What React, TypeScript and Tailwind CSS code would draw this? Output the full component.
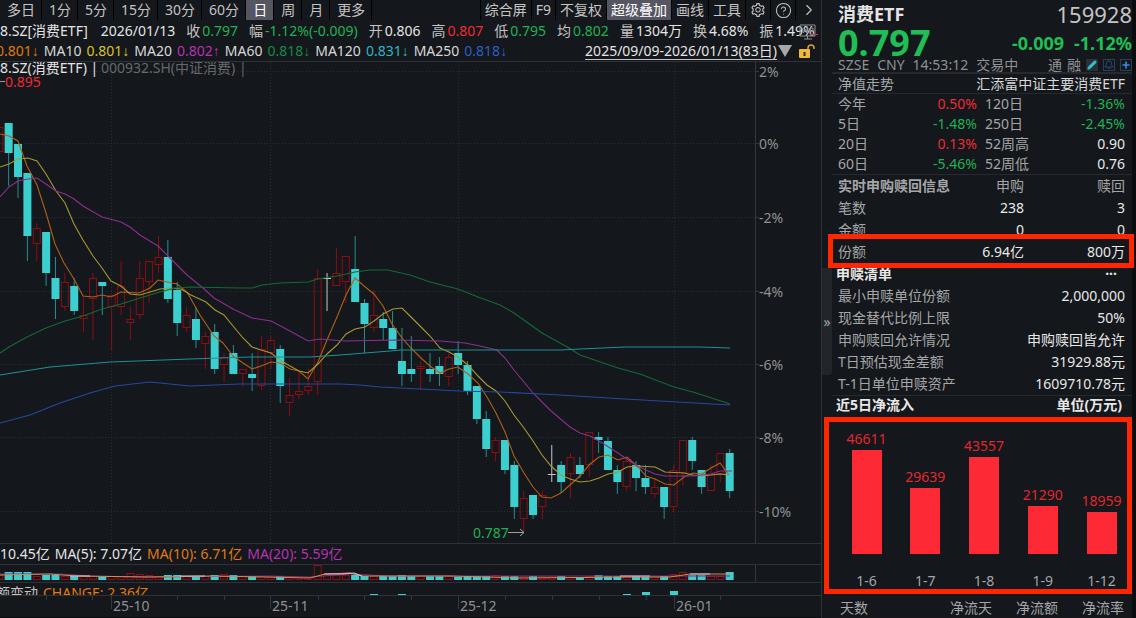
import { Bell, ChevronRight, CircleHelp, Pencil, Plus } from "lucide-react"
import { AiOutlineSetting } from "react-icons/ai"

const STEP = 9.364

// [type, high, top, bottom, low] with c = falling, r = rising, w = unchanged
type Candle = [string, number, number, number, number]

const candles: Candle[] = [
  ["r", 127, 127, 152, 152], ["c", 123, 123, 153, 186], ["c", 144, 144, 177, 198],
  ["c", 173, 173, 236, 261], ["r", 223, 228, 244, 261], ["c", 232, 232, 273, 286],
  ["c", 257, 278, 299, 319], ["r", 273, 282, 307, 311], ["c", 278, 286, 311, 315],
  ["r", 297, 315, 319, 332], ["r", 273, 278, 299, 340], ["c", 282, 282, 286, 315],
  ["r", 295, 295, 307, 350], ["r", 261, 286, 307, 315], ["r", 307, 319, 323, 340],
  ["r", 261, 278, 315, 319], ["r", 261, 261, 282, 303], ["r", 236, 257, 265, 273],
  ["c", 240, 257, 299, 303], ["c", 282, 290, 323, 336], ["r", 307, 315, 328, 332],
  ["c", 307, 319, 340, 348], ["r", 332, 336, 344, 369], ["c", 324, 332, 369, 374],
  ["r", 353, 357, 365, 382], ["c", 345, 353, 374, 374], ["r", 369, 369, 374, 386],
  ["c", 353, 374, 378, 391], ["r", 336, 349, 386, 390], ["r", 336, 340, 353, 369],
  ["c", 345, 349, 386, 403], ["r", 378, 395, 403, 416], ["r", 370, 391, 395, 399],
  ["r", 369, 386, 391, 395], ["r", 269, 278, 382, 395], ["w", 273, 278, 278, 311],
  ["r", 248, 273, 286, 286], ["r", 256, 256, 282, 303], ["c", 236, 269, 302, 302],
  ["c", 299, 303, 324, 353], ["r", 290, 315, 328, 332], ["c", 312, 319, 328, 340],
  ["c", 311, 328, 349, 349], ["c", 328, 361, 374, 386], ["c", 336, 369, 374, 382],
  ["r", 361, 366, 369, 390], ["c", 353, 369, 374, 382], ["c", 357, 366, 374, 386],
  ["r", 353, 357, 377, 386], ["c", 341, 353, 365, 374], ["c", 361, 365, 391, 395],
  ["c", 386, 386, 419, 424], ["c", 411, 419, 449, 457], ["r", 437, 440, 453, 461],
  ["c", 440, 440, 470, 474], ["c", 461, 465, 507, 519], ["r", 491, 498, 519, 532],
  ["c", 495, 495, 515, 519], ["r", 491, 495, 507, 519], ["w", 445, 474, 474, 482],
  ["c", 461, 465, 482, 493], ["r", 453, 457, 474, 498], ["c", 457, 465, 474, 478],
  ["r", 432, 432, 465, 477], ["c", 432, 437, 440, 453], ["c", 437, 441, 470, 470],
  ["c", 465, 470, 482, 494], ["r", 457, 461, 487, 491], ["c", 461, 465, 478, 491],
  ["c", 465, 478, 487, 494], ["r", 478, 487, 494, 498], ["c", 487, 487, 507, 519],
  ["r", 465, 470, 507, 512], ["r", 440, 440, 473, 486], ["c", 437, 440, 461, 470],
  ["c", 470, 470, 487, 494], ["r", 465, 474, 491, 491], ["r", 453, 453, 474, 482],
  ["c", 449, 453, 491, 498],
]

const volumes = [
  5, 8, 8, 8, 4, 5, 5, 4, 4, 4, 4, 4, 4, 4, 7, 6, 5, 4, 5, 5, 4, 4, 4, 5, 6, 5, 4, 4, 4, 4,
  4, 4, 3, 3, 15, 6, 5, 5, 5, 4, 4, 4, 4, 5, 4, 4, 4, 4, 4, 3, 4, 4, 4, 5, 4, 4, 4, 4, 4, 4,
  4, 3, 3, 4, 5, 4, 4, 4, 4, 3, 4, 4, 6, 8, 5, 5, 4, 4, 8,
]

const averages = [
  { color: "#b06018", points: "0,134 9,136 18,141 27,166 37,185 46,213 55,244 64,263 74,279 83,296 93,297 102,295 111,297 121,292 139,293 150,288 158,280 167,282 177,284 187,292 200,315 214,336 223,343 233,356 243,363 252,369 261,366 271,362 280,363 290,369 299,371 308,379 318,362 327,340 337,317 346,295 355,278 364,286 374,294 383,306 392,324 402,338 411,348 421,358 430,366 440,373 449,369 458,367 468,374 478,383 487,397 496,413 505,432 514,456 524,473 533,487 542,497 551,498 561,493 570,485 580,476 590,464 599,457 608,455 618,460 627,457 637,466 646,476 655,479 665,484 674,485 684,477 693,473 702,474 711,468 720,463 729,475" },
  { color: "#a89830", points: "0,167 9,164 18,159 28,158 37,161 46,174 56,191 65,203 74,224 83,240 93,256 102,268 111,281 121,286 130,294 140,295 150,292 160,289 170,288 181,289 191,295 206,302 215,310 224,315 233,326 243,338 252,347 261,350 271,353 280,360 290,366 299,371 308,373 318,364 327,354 337,345 346,334 355,329 365,327 374,321 383,314 393,309 402,308 411,317 421,327 430,336 440,348 449,352 458,357 468,365 478,376 487,385 496,391 505,401 514,415 524,428 533,441 542,455 551,466 561,475 570,479 580,482 590,481 599,478 608,474 618,472 627,467 637,466 655,467 665,472 684,473 693,475 702,476 720,474 729,475" },
  { color: "#8c2f8f", points: "0,197 9,187 18,181 28,179 37,178 46,184 56,191 65,194 74,199 83,206 102,217 121,222 130,227 140,235 158,246 168,256 187,275 203,288 214,298 233,309 252,318 271,321 290,331 308,341 320,339 345,341 395,340 440,341 465,343 480,346 497,350 505,358 514,370 533,393 550,410 570,427 580,433 590,436 599,441 618,453 637,466 655,474 665,476 693,476 711,474 720,471 732,471" },
  { color: "#136a35", points: "0,353 9,347 27,337 46,328 65,321 83,316 102,309 121,304 140,298 160,292 175,288 190,287 240,288 252,288 262,285 280,283 308,282 318,279 337,276 355,272 370,270 388,270 410,275 430,282 458,289 478,297 500,305 514,313 542,333 569,348 580,355 618,368 640,374 674,387 693,392 730,404" },
  { color: "#1f8f96", points: "0,375 50,367 110,362 190,359 250,357 310,357 340,355 390,351 400,350 460,350 560,350 580,349 625,347 700,347 730,348" },
  { color: "#2449a0", points: "0,423 30,415 60,403 90,393 115,386 150,382 190,386 240,384 340,384 360,385 380,387 420,389 460,391 500,392 560,395 625,399 730,405" },
]

const months = [
  { x: 111, label: "25-10" },
  { x: 270, label: "25-11" },
  { x: 458, label: "25-12" },
  { x: 674, label: "26-01" },
]

const levels = [
  { y: 72, label: "2%" },
  { y: 144, label: "0%" },
  { y: 218, label: "-2%" },
  { y: 292, label: "-4%" },
  { y: 365, label: "-6%" },
  { y: 438, label: "-8%" },
  { y: 512, label: "-10%" },
]

const periods = ["多日", "1分", "5分", "15分", "30分", "60分", "日", "周", "月", "更多"]
const tools = ["综合屏", "F9", "不复权", "超级叠加", "画线", "工具"]

const quotes = [
  { label: "收", value: "0.797", color: "text-[#1fb255]" },
  { label: "幅", value: "-1.12%(-0.009)", color: "text-[#1fb255]" },
  { label: "开", value: "0.806", color: "text-[#e4e4e4]" },
  { label: "高", value: "0.807", color: "text-[#ee2a33]" },
  { label: "低", value: "0.795", color: "text-[#1fb255]" },
  { label: "均", value: "0.802", color: "text-[#1fb255]" },
  { label: "量", value: "1304万", color: "text-[#e4e4e4]" },
  { label: "换", value: "4.68%", color: "text-[#e4e4e4]" },
  { label: "振", value: "1.49%", color: "text-[#e4e4e4]" },
]

const maValues = [
  { label: "", value: "0.801", arrow: "↓", color: "text-[#e07a10]" },
  { label: "MA10", value: "0.801", arrow: "↓", color: "text-[#dcc02c]" },
  { label: "MA20", value: "0.802", arrow: "↑", color: "text-[#b433b4]" },
  { label: "MA60", value: "0.818", arrow: "↓", color: "text-[#168a42]" },
  { label: "MA120", value: "0.831", arrow: "↓", color: "text-[#2fb4c4]" },
  { label: "MA250", value: "0.818", arrow: "↓", color: "text-[#2d5fc4]" },
]

const returns = [
  ["今年", "0.50%", "120日", "-1.36%"],
  ["5日", "-1.48%", "250日", "-2.45%"],
  ["20日", "0.13%", "52周高", "0.90"],
  ["60日", "-5.46%", "52周低", "0.76"],
]

const basket = [
  ["最小申赎单位份额", "2,000,000"],
  ["现金替代比例上限", "50%"],
  ["申购赎回允许情况", "申购赎回皆允许"],
  ["T日预估现金差额", "31929.88元"],
  ["T-1日单位申赎资产", "1609710.78元"],
]

const flows = [
  { day: "1-6", value: 46611 },
  { day: "1-7", value: 29639 },
  { day: "1-8", value: 43557 },
  { day: "1-9", value: 21290 },
  { day: "1-12", value: 18959 },
]

function valueColor(value: string) {
  if (!value.endsWith("%")) return "text-[#e8e8e8]"
  return value.startsWith("-") ? "text-[#1fb255]" : "text-[#ee2a33]"
}

function candleX(i: number) {
  return i * STEP - 0.7
}

function CandleShape({ candle, x }: { candle: Candle; x: number }) {
  const [type, high, top, bottom, low] = candle

  if (type === "c") {
    return (
      <g>
        <path d={`M${x} ${high}V${low}`} stroke="#258f92" />
        <rect x={x - 4} y={top} width="8" height={bottom - top} fill="#3bcfcf" />
      </g>
    )
  }
  if (type === "w") {
    return <path d={`M${x} ${high}V${low}M${x - 4} ${top + 0.5}h8`} stroke="#c8c8c8" />
  }
  return (
    <g stroke="#8f0c10" fill="none">
      <path d={`M${x} ${high}V${top}M${x} ${bottom}V${low}`} />
      <rect x={x - 3.5} y={top + 0.5} width="7" height={Math.max(bottom - top - 1, 2)} />
    </g>
  )
}

function PriceChart() {
  return (
    <svg viewBox="0 62 821 481" className="block w-full" fontSize="14">
      <g stroke="#2a2d31" strokeDasharray="1 2">
        {levels.map((l) => (
          <path key={l.y} d={`M0 ${l.y - 0.5}H755`} />
        ))}
        {months.map((m) => (
          <path key={m.x} d={`M${m.x + 0.5} 62V543`} />
        ))}
      </g>
      <path d="M755.5 62V543" stroke="#34373b" />
      {levels.map((l) => (
        <g key={l.y}>
          <path d={`M755 ${l.y - 0.5}h4`} stroke="#34373b" />
          <text x="759" y={l.y + 5} fill="#8f9194">{l.label}</text>
        </g>
      ))}

      {candles.map((c, i) => (
        <CandleShape key={i} candle={c} x={candleX(i)} />
      ))}
      {averages.map((a) => (
        <polyline key={a.color} points={a.points} fill="none" stroke={a.color} strokeWidth="1.1" />
      ))}

      <text x="0" y="73" fill="#e4e4e4">8.SZ(消费ETF) |</text>
      <text x="101" y="73" fill="#66686b">000932.SH(中证消费) |</text>
      <path d="M0 81.5h5" stroke="#9a9a9a" />
      <text x="5" y="87" fill="#ee2a33">0.895</text>
      <text x="473" y="538" fill="#1fb255">0.787</text>
      <path d="M508 532.5h16M520 529l4 3.5l-4 3.5" stroke="#a0a0a0" fill="none" />
    </svg>
  )
}

function VolumeChart() {
  return (
    <svg viewBox="0 0 821 17" className="block w-full">
      <path d="M755.5 0V17" stroke="#34373b" />
      {volumes.map((v, i) =>
        candles[i][0] === "c" ? (
          <rect key={i} x={candleX(i) - 4} y={15 - v} width="8" height={v} fill="#3bcfcf" />
        ) : (
          <rect key={i} x={candleX(i) - 3.5} y={15.5 - v} width="7" height={v - 1} fill="none" stroke="#8f0c10" />
        )
      )}
      <g fill="none">
        <path d="M0 9L60 9L90 11L140 12L270 11L310 12L350 9L390 11L460 11L560 11L730 11" stroke="#7d2f86" />
        <path d="M0 10L50 9L75 11L150 12L210 11L265 12L310 13L325 9L350 8L362 11L450 11L520 13L640 12L670 12L690 9L730 9" stroke="#d88a4e" />
        <path d="M70 11h20M180 11h25M324 9h18l12-1l8 3M620 11h30M690 9h20" stroke="#d8c0d0" />
      </g>
    </svg>
  )
}

function TimeAxis() {
  const ticks = [46, 92, 177, 224, 318, 364, 411, 505, 552, 599, 646, 720]
  return (
    <svg viewBox="0 0 821 22" className="block w-full border-t border-[#2e3135]" fontSize="14">
      <path d={ticks.map((x) => `M${x + 0.5} 0v4`).join("")} stroke="#34373b" />
      {months.map((m) => (
        <g key={m.x}>
          <path d={`M${m.x + 0.5} 0v13`} stroke="#34373b" />
          <text x={m.x + 2} y="15" fill="#8f9194">{m.label}</text>
        </g>
      ))}
      <path d="M0 21.5H821" stroke="#0a0b0d" />
    </svg>
  )
}

function Toolbar() {
  return (
    <nav className="flex h-5 justify-between overflow-hidden text-[#c4c4c4]">
      <div className="flex">
        {periods.map((p) => (
          <button
            key={p}
            className={`border-r border-black pr-1.5 pl-[7px] ${p === "日" ? "bg-[#565663] text-white" : ""}`}
          >
            {p}
          </button>
        ))}
      </div>
      <div className="flex border-l border-black">
        {tools.map((t) => (
          <button
            key={t}
            className={`border-r border-black px-1 ${t === "超级叠加" ? "bg-[#565663] text-white" : ""}`}
          >
            {t}
          </button>
        ))}
        <button aria-label="设置" className="flex w-[25px] items-center justify-center border-r border-black">
          <AiOutlineSetting size={16} />
        </button>
        <button aria-label="帮助" className="flex w-[25px] items-center justify-center border-r border-black">
          <CircleHelp size={17} strokeWidth={1.5} />
        </button>
        <button aria-label="展开" className="flex w-[25px] items-center justify-center">
          <ChevronRight size={18} strokeWidth={1.5} />
        </button>
      </div>
    </nav>
  )
}

function ChartPanel() {
  return (
    <main className="min-w-0 flex-1 border-r border-[#2e3135]">
      <Toolbar />

      <div className="relative flex h-[21px] items-center gap-[11px] overflow-hidden">
        <span>8.SZ[消费ETF]</span>
        <span className="pl-0.5">2026/01/13</span>
        {quotes.map((q) => (
          <span key={q.label} className="flex gap-0.5">
            <span className="text-[#c4c4c4]">{q.label}</span>
            <span className={q.color}>{q.value}</span>
          </span>
        ))}
        <svg viewBox="0 0 22 18" className="absolute right-0.5 h-[18px] w-[22px]" fill="none">
          <path d="M3 3h15v11h-15zM7 17h8M10.5 14v3" stroke="#8f9194" />
          <path d="M5 6l1.5 5l1.5-4l1.5 4l1.5-5M13 11v-5h3v3h-3" stroke="#8f9194" />
          <path d="M13 12.5h2M16 12.5h2M19 12.5h2" stroke="#ee2a33" />
        </svg>
      </div>

      <div className="flex h-[21px] items-center justify-between overflow-hidden border-b border-[#2e3135]">
        <div className="-ml-1 flex gap-[5px]">
          {maValues.map((m) => (
            <span key={m.label} className="flex gap-[5px]">
              {m.label && <span className="text-[#d8d8d8]">{m.label}</span>}
              <span className={m.color}>
                {m.value}
                <span className="font-['Liberation_Sans'] font-bold">{m.arrow}</span>
              </span>
            </span>
          ))}
        </div>
        <div className="flex items-center pr-1.5">
          <button className="border-b border-[#c4c4c4] leading-4">2025/09/09-2026/01/13(83日)</button>
          <svg viewBox="0 0 14 12" className="ml-px h-3 w-[14px]">
            <path d="M0 0h14l-7 12z" fill="#a8a8a8" />
          </svg>
          <svg viewBox="0 0 16 15" className="ml-[7px] h-[15px] w-4">
            <path d="M9 6V4a3 3 0 0 1 6 0v1" fill="none" stroke="#d9a32c" strokeWidth="1.5" />
            <rect x="0" y="5" width="11" height="9" rx="1" fill="#f0b93c" />
            <path d="M5.5 8v4" stroke="#3a2c08" strokeWidth="2" />
          </svg>
        </div>
      </div>

      <PriceChart />

      <div className="flex h-[22px] items-center gap-[5px] overflow-hidden border-y border-[#2e3135]">
        <span>10.45亿</span>
        <span>MA(5): 7.07亿</span>
        <span className="text-[#e07a10]">MA(10): 6.71亿</span>
        <span className="text-[#b433b4]">MA(20): 5.59亿</span>
      </div>
      <VolumeChart />
      <div className="relative h-[13px] overflow-hidden border-t border-[#2e3135]">
        <div className="flex gap-[5px] leading-5">
          <span className="-ml-1 text-[#c4c4c4]">额变动</span>
          <span className="text-[#e07a10]">CHANGE: 2.36亿</span>
        </div>
        <svg viewBox="0 0 821 12" className="absolute inset-x-0 bottom-0 w-full">
          <path d="M370 11h8v1h-8zM398 11h8v1h-8zM623 11h8v1h-8zM642 9h8v3h-8zM670 8h8v4h-8z" fill="#3bcfcf" />
        </svg>
      </div>
      <TimeAxis />
    </main>
  )
}

function FlowChart() {
  const max = flows[0].value
  return (
    <div className="-ml-2 flex h-[177px] justify-between border-[5px] border-[#ff2600] pr-[5px] pl-[17px] text-[#e02830]">
      {flows.map((f) => (
        <div key={f.day} className="flex w-[41px] flex-col items-center justify-end whitespace-nowrap">
          <span className="leading-[22px]">{f.value}</span>
          <div className="w-[30px] bg-[#fd2935]" style={{ height: Math.round((f.value / max) * 104) }} />
          <span className="pt-[18px] leading-[17px] text-[#a4a6a8]">{f.day}</span>
        </div>
      ))}
    </div>
  )
}

function QuotePanel() {
  return (
    <aside className="relative w-[314px] shrink-0 border-r-4 border-[#0b0c0e] pl-[10px] text-[#a4a6a8]">
      <button
        aria-label="收起"
        className="absolute top-[268px] left-0 h-[107px] w-[10px] rounded-r bg-[#22252a]"
      >
        »
      </button>

      <header className="border-b-2 border-[#26292d] pl-1.5">
        <div className="flex h-7 items-center justify-between">
          <h1 className="text-[18px] leading-6 font-bold text-[#e4e4e4]">消费ETF</h1>
          <span className="text-[22px] leading-6 text-[#c4c4c4]">159928</span>
        </div>
        <div className="flex h-[29px] items-center justify-between font-bold text-[#1fbf55]">
          <span className="text-[36px] leading-7">0.797</span>
          <span className="flex gap-[10px] text-[18px]">
            <span>-0.009</span>
            <span>-1.12%</span>
          </span>
        </div>
        <div className="flex h-[15px] items-center justify-between leading-4 text-[#8f9194]">
          <span className="flex gap-2">
            <span>SZSE</span>
            <span>CNY</span>
            <span>14:53:12</span>
            <span>交易中</span>
          </span>
          <span className="flex items-center gap-[5px]">
            <span>通</span>
            <span>融</span>
            <button aria-label="编辑" className="bg-[#2c2f33] p-px text-[#2fc4d4]">
              <Pencil size={10} fill="currentColor" />
            </button>
            <button aria-label="提醒" className="border border-[#2c3f58] text-[#2d5f9c]">
              <Bell size={10} />
            </button>
            <button aria-label="添加" className="border border-[#2c3f58] text-[#3a8ae0]">
              <Plus size={10} strokeWidth={4} />
            </button>
          </span>
        </div>
      </header>

      <div className="flex h-[20px] items-center justify-between border-b border-[#26292d] pr-[7px] pl-1.5">
        <h2>净值走势</h2>
        <span className="text-[#d8d8d8]">汇添富中证主要消费ETF</span>
      </div>

      <div className="border-b border-[#26292d] pr-[7px] pl-1.5">
        <table className="w-full table-fixed">
          <tbody>
            {returns.map(([a, av, b, bv]) => (
              <tr key={a} className="h-5">
                <th className="w-12 text-left font-normal">{a}</th>
                <td className={`w-[99px] pr-2 text-right ${valueColor(av)}`}>{av}</td>
                <th className="text-left font-normal">{b}</th>
                <td className={`text-right ${valueColor(bv)}`}>{bv}</td>
              </tr>
            ))}
          </tbody>
        </table>
      </div>

      <div className="relative pr-[7px] pl-1.5">
        <table className="w-full text-right">
          <thead>
            <tr className="h-[22px]">
              <th className="text-left font-bold">实时申购赎回信息</th>
              <th className="font-normal">申购</th>
              <th className="w-[101px] font-normal">赎回</th>
            </tr>
          </thead>
          <tbody className="text-[#e8e8e8]">
            <tr className="h-[22px]">
              <th className="text-left font-normal text-[#a4a6a8]">笔数</th>
              <td>238</td>
              <td>3</td>
            </tr>
            <tr className="h-[22px]">
              <th className="text-left font-normal text-[#a4a6a8]">金额</th>
              <td>0</td>
              <td>0</td>
            </tr>
            <tr className="h-[22px]">
              <th className="text-left font-normal text-[#a4a6a8]">份额</th>
              <td>6.94亿</td>
              <td>800万</td>
            </tr>
          </tbody>
        </table>
        <div className="absolute -right-0.5 -bottom-[5px] -left-1 h-[34px] border-[5px] border-[#ff2600]" />
      </div>

      <div className="border-b border-[#26292d] pr-[7px] pl-1.5">
        <div className="-ml-0.5 flex h-[22px] items-center justify-between pr-2 font-bold text-[#e8e8e8]">
          <h2>申赎清单</h2>
          <button aria-label="更多" className="leading-none">···</button>
        </div>
        <table className="w-full">
          <tbody>
            {basket.map(([label, value]) => (
              <tr key={label} className="h-[22px]">
                <th className="text-left font-normal">{label}</th>
                <td className="text-right text-[#e8e8e8]">{value}</td>
              </tr>
            ))}
          </tbody>
        </table>
      </div>

      <div className="flex h-[21px] justify-between pr-[10px] pl-1 leading-[18px] font-bold text-[#e8e8e8]">
        <h2>近5日净流入</h2>
        <span>单位(万元)</span>
      </div>
      <FlowChart />

      <div className="flex h-6 items-center gap-6 pt-1 pr-2 pl-2">
        <span className="flex-1">天数</span>
        <span>净流天</span>
        <span>净流额</span>
        <span>净流率</span>
      </div>
    </aside>
  )
}

export default function App() {
  return (
    <div className="flex min-h-screen overflow-hidden bg-[#14171b] font-['Noto_Sans','Noto_Sans_CJK_SC',sans-serif] text-[14px] leading-5 whitespace-nowrap text-[#e4e4e4]">
      <ChartPanel />
      <QuotePanel />
    </div>
  )
}
